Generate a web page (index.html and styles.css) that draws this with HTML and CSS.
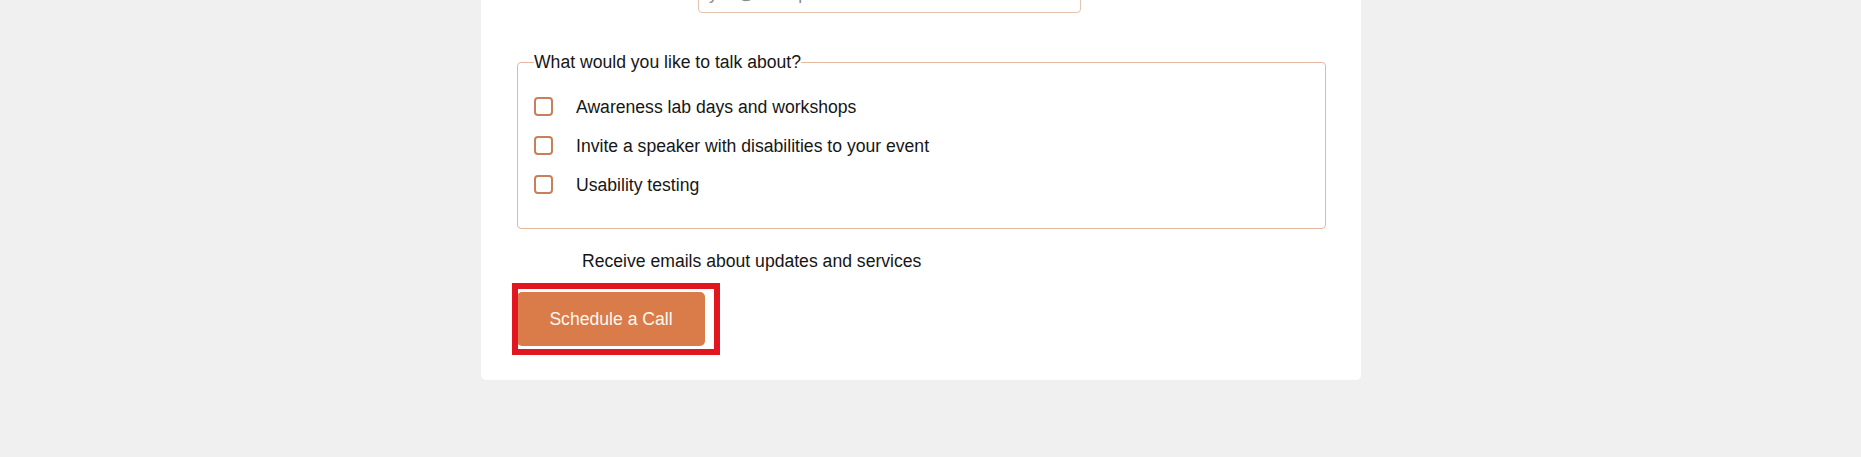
FILE: index.html
```html
<!DOCTYPE html>
<html lang="en">
<head>
<meta charset="utf-8">
<title>Schedule a Call</title>
<link rel="stylesheet" href="styles.css">
</head>
<body>
  <main class="card">
    <div class="field-row">
      <input class="text-input" type="email" placeholder="you@example.com">
    </div>

    <fieldset class="topics">
      <legend class="topics-legend">What would you like to talk about?</legend>
      <div class="topic-list">
        <label class="topic"><span class="box"></span><span>Awareness lab days and workshops</span></label>
        <label class="topic"><span class="box"></span><span>Invite a speaker with disabilities to your event</span></label>
        <label class="topic"><span class="box"></span><span>Usability testing</span></label>
      </div>
    </fieldset>

    <p class="newsletter">Receive emails about updates and services</p>

    <div class="actions">
      <button class="primary-btn" type="button">Schedule a Call</button>
      <span class="highlight" aria-hidden="true"></span>
    </div>
  </main>
</body>
</html>
```

FILE: styles.css
```css
html, body {
  margin: 0;
  padding: 0;
}

body {
  background: #f0f0f0;
  font-family: "Liberation Sans", Arial, sans-serif;
  font-size: 17.6px;
  color: #161616;
  height: 457px;
  overflow: hidden;
}

.card {
  box-sizing: border-box;
  width: 880px;
  margin: -40px 0 0 481px;
  padding: 13px 35px 34px 36px;
  background: #ffffff;
  border-radius: 5px;
}

.field-row {
  display: flex;
  padding-left: 181px;
}

.text-input {
  box-sizing: border-box;
  width: 383px;
  height: 40px;
  padding: 0 10px;
  border: 1px solid #e6c3ad;
  border-radius: 4px;
  font-family: inherit;
  font-size: 17.6px;
  color: #222;
  background: #fff;
}

.text-input::placeholder {
  color: #8a8a8a;
}

.topics {
  box-sizing: border-box;
  width: 809px;
  margin: 39px 0 0 0;
  padding: 0 16px 24px 16px;
  border: 1px solid #e3b89e;
  border-radius: 4px;
}

.topics-legend {
  padding: 0;
  margin-left: 0;
  line-height: 20px;
}

.topic-list {
  display: flex;
  flex-direction: column;
  margin-top: 15px;
}

.topic {
  display: flex;
  align-items: center;
  height: 39px;
  line-height: 20px;
}

.box {
  box-sizing: border-box;
  width: 19px;
  height: 19px;
  margin-right: 23px;
  border: 2px solid #c8805a;
  border-radius: 4px;
  flex: none;
}

.newsletter {
  margin: 22px 0 0 0;
  padding-left: 65px;
  line-height: 20px;
}

.actions {
  position: relative;
  display: inline-block;
  margin-top: 21px;
}

.primary-btn {
  display: block;
  box-sizing: border-box;
  width: 188px;
  height: 54px;
  padding: 0;
  border: none;
  border-radius: 5px;
  background: #d97c4a;
  color: #fff8f0;
  font-family: inherit;
  font-size: 17.6px;
}

.highlight {
  position: absolute;
  top: -9px;
  right: -15px;
  bottom: -9px;
  left: -5px;
  border: 6px solid #e2161f;
  pointer-events: none;
}
```
